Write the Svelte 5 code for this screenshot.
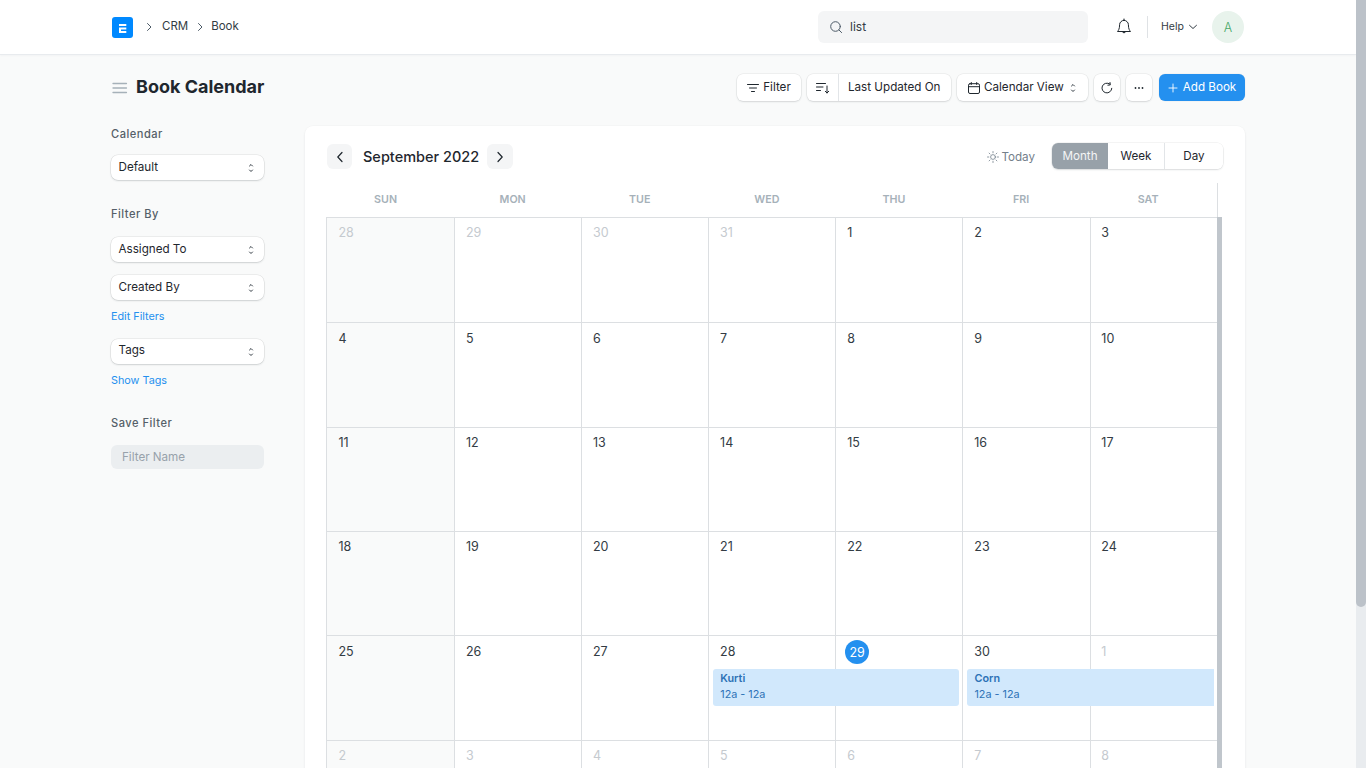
<script>
  const dows = ['SUN','MON','TUE','WED','THU','FRI','SAT'];
  const mk = (a, muted) => a.map((n) => ({ n, muted }));
  const weeks = [
    [...mk([28,29,30,31], true), ...mk([1,2,3], false)],
    mk([4,5,6,7,8,9,10], false),
    mk([11,12,13,14,15,16,17], false),
    mk([18,19,20,21,22,23,24], false),
    [...mk([25,26,27,28,29,30], false), ...mk([1], true)],
    mk([2,3,4,5,6,7,8], true)
  ];
  const heights = [105, 105, 104, 104, 105, 60];
</script>

{#snippet updown()}
  <svg class="updown" width="8" height="14" viewBox="0 0 8 14" fill="none" stroke="#333c44" stroke-width="1" stroke-linecap="round" stroke-linejoin="round"><path d="M2.500 5l1.500-1.500L5.500 5M2.500 9l1.500 1.500L5.500 9"/></svg>
{/snippet}

<div class="page">
  <div class="main">
    <header class="nav">
      <div class="nav-in">
        <svg class="logo" width="21" height="21" viewBox="0 0 21 21"><rect width="21" height="21" rx="3" fill="#0089ff"/><path d="M7 7h7.300v2H7zM9 10.500h5.300v2H9zM7 10.500h2V14h5.300v2H7z" fill="#fff"/></svg>
        <svg class="crumb-sep first" width="8" height="10" viewBox="0 0 8 10" fill="none" stroke="#4c5a67" stroke-width="1" stroke-linecap="round" stroke-linejoin="round"><path d="M2.500 1.500L6 5 2.500 8.500"/></svg>
        <span class="crumb">CRM</span>
        <svg class="crumb-sep" width="8" height="10" viewBox="0 0 8 10" fill="none" stroke="#4c5a67" stroke-width="1" stroke-linecap="round" stroke-linejoin="round"><path d="M2.500 1.500L6 5 2.500 8.500"/></svg>
        <span class="crumb">Book</span>
        <div class="search">
          <svg width="14" height="14" viewBox="0 0 14 14" fill="none" stroke="#4c5a67" stroke-width="1" stroke-linecap="round"><circle cx="6.500" cy="6.500" r="4.800"/><path d="M10 10l2.600 2.600"/></svg>
          <span>list</span>
        </div>
        <svg class="bell" width="16" height="18" viewBox="0 0 16 18" fill="none" stroke="#1f272e" stroke-width="1" stroke-linecap="round" stroke-linejoin="round"><path d="M8 2.300a4.400 4.400 0 0 0-4.400 4.400c0 4.200-1.200 5.800-2.100 6.800h13c-.9-1-2.100-2.600-2.100-6.800A4.400 4.400 0 0 0 8 2.300zM8 1v1.300M6.300 13.600a1.800 1.800 0 0 0 3.400 0"/></svg>
        <div class="vr"></div>
        <span class="help">Help</span>
        <svg class="help-c" width="10" height="8" viewBox="0 0 10 8" fill="none" stroke="#333c44" stroke-width="1" stroke-linecap="round" stroke-linejoin="round"><path d="M1.500 2.300L5 5.500l3.500-3.200"/></svg>
        <div class="avatar">A</div>
      </div>
    </header>

    <div class="body">
      <div class="pagehead">
        <svg class="menu" width="16" height="12" viewBox="0 0 16 12" fill="none" stroke="#a6b1b9" stroke-width="1.300" stroke-linecap="round"><path d="M1 1.500h13.500M1 6h13.500M1 10.500h13.500"/></svg>
        <h1>Book Calendar</h1>
        <div class="actions">
          <button class="btn filter">
            <svg width="12" height="10" viewBox="0 0 12 10" fill="none" stroke="#1f272e" stroke-width="1" stroke-linecap="round"><path d="M.5 1.500h11M2.500 5h7M4.500 8.500h3"/></svg>
            Filter
          </button>
          <div class="btn sort">
            <span class="sort-ic">
              <svg width="14" height="12" viewBox="0 0 14 12" fill="none" stroke="#1f272e" stroke-width="1" stroke-linecap="round" stroke-linejoin="round"><path d="M.5 1.500h9M.5 5h6.500M.5 8.500h4M11 4v7M9.300 9.300L11 11l1.700-1.700"/></svg>
            </span>
            <span class="sort-t">Last Updated On</span>
          </div>
          <button class="btn view">
            <svg width="12" height="12" viewBox="0 0 12 12" fill="none" stroke="#1f272e" stroke-width="1" stroke-linecap="round"><rect x=".5" y="1.700" width="11" height="9.800" rx="1.500"/><path d="M.5 4.700h11M3.300.5v2M8.700.5v2"/></svg>
            <span>Calendar View</span>
            {@render updown()}
          </button>
          <button class="btn square" aria-label="Refresh">
            <svg width="12" height="12" viewBox="0 0 12 12" fill="none" stroke="#1f272e" stroke-width="1" stroke-linecap="round" stroke-linejoin="round"><path d="M10.800 6.300A4.900 4.900 0 1 1 8.600 1.900M9 .5l.3 2.400-2.400.3"/></svg>
          </button>
          <button class="btn square more" aria-label="More">
            <svg width="10" height="4" viewBox="0 0 10 4" fill="#1f272e"><circle cx="1.500" cy="2" r=".9"/><circle cx="5" cy="2" r=".9"/><circle cx="8.500" cy="2" r=".9"/></svg>
          </button>
          <button class="btn primary">
            <svg width="10" height="10" viewBox="0 0 10 10" fill="none" stroke="#fff" stroke-width=".9" stroke-linecap="round"><path d="M5 1v8M1 5h8"/></svg>
            Add Book
          </button>
        </div>
      </div>

      <div class="columns">
        <aside class="side">
          <div class="lab first">Calendar</div>
          <div class="sel">Default {@render updown()}</div>
          <div class="lab filterby">Filter By</div>
          <div class="sel assigned">Assigned To {@render updown()}</div>
          <div class="sel second">Created By {@render updown()}</div>
          <div class="lnk one">Edit Filters</div>
          <div class="sel tags">Tags {@render updown()}</div>
          <div class="lnk two">Show Tags</div>
          <div class="lab save">Save Filter</div>
          <div class="fname">Filter Name</div>
        </aside>

        <section class="card">
          <div class="toolbar">
            <button class="navb" aria-label="Previous">
              <svg width="8" height="12" viewBox="0 0 8 12" fill="none" stroke="#1f272e" stroke-width="1.200" stroke-linecap="round" stroke-linejoin="round"><path d="M6 1.500L1.800 6 6 10.500"/></svg>
            </button>
            <h2>September 2022</h2>
            <button class="navb next" aria-label="Next">
              <svg width="8" height="12" viewBox="0 0 8 12" fill="none" stroke="#1f272e" stroke-width="1.200" stroke-linecap="round" stroke-linejoin="round"><path d="M2 1.500L6.200 6 2 10.500"/></svg>
            </button>
            <div class="today">
              <svg width="12" height="12" viewBox="0 0 12 12" fill="none" stroke="#74808b" stroke-width=".8" stroke-linecap="round"><circle cx="6" cy="6" r="2.400"/><path d="M6 .5v1.300M6 10.200v1.300M.5 6h1.300M10.200 6h1.300M2.100 2.100l.9.9M9 9l.9.9M2.100 9.900l.9-.9M9 3l.9-.9"/></svg>
              Today
            </div>
            <div class="seg">
              <span class="active">Month</span>
              <span class="wk">Week</span>
              <span class="dy">Day</span>
            </div>
          </div>

          <div class="cal">
            <div class="dow">
              {#each dows as d}<div>{d}</div>{/each}
            </div>
            <div class="grid-wrap">
              {#each weeks as w, i}
                <div class="week" style="height:{heights[i]}px">
                  {#each w as c, j}
                    <div class="cell" class:sun={j === 0} class:last={j === 6} style="grid-column:{j + 1}">
                      {#if i === 4 && j === 4}
                        <span class="today-n">{c.n}</span>
                      {:else}
                        <span class="num" class:muted={c.muted}>{c.n}</span>
                      {/if}
                    </div>
                  {/each}
                  {#if i === 4}
                    <div class="ev kurti"><b>Kurti</b><span>12a - 12a</span></div>
                    <div class="ev corn"><b>Corn</b><span>12a - 12a</span></div>
                  {/if}
                </div>
              {/each}
            </div>
            <div class="inner-bar"></div>
          </div>
        </section>
      </div>
    </div>
  </div>
  <div class="vbar"><div class="thumb"></div></div>
</div>

<style>
  :global(body) { margin: 0; overflow: hidden; background: #f9fafa; }
  * { box-sizing: border-box; }
  .page { display: flex; height: 768px; overflow: hidden; font-family: Inter, "Liberation Sans", sans-serif; font-size: 11.650px; color: #1f272e; }
  .main { width: 1356px; flex: none; }
  .vbar { width: 10px; flex: none; background: #e9ecef; }
  .thumb { height: 607px; background: #bcc2c9; border-radius: 0 0 5px 5px; }
  button { font: inherit; color: inherit; padding: 0; border: 0; background: none; }

  .nav { height: 55px; background: #fff; border-bottom: 1px solid #e8ebee; box-shadow: 0 1px 2px rgba(25,39,52,.03); }
  .nav-in { display: flex; align-items: center; height: 54px; padding: 0 112px; }
  .logo { flex: none; align-self: flex-start; margin-top: 17px; }
  .crumb-sep { flex: none; margin-left: 8px; margin-right: 7px; margin-top: -1px; }
  .crumb-sep.first { margin-left: 12px; margin-right: 9px; }
  .crumb { color: #333c44; font-size: 11.500px; margin-top: -2px; }
  .search { margin-left: auto; width: 270px; height: 32px; margin-right: 28px; background: #f4f5f6; border-radius: 6px; display: flex; align-items: center; gap: 8px; padding-left: 11px; color: #333c44; font-size: 12px; }
  .search span { margin-top: -1px; margin-left: -1px; }
  .bell { flex: none; margin-right: 15px; }
  .vr { width: 1px; height: 22px; background: #dfe2e5; margin-right: 13px; }
  .help { font-size: 10.500px; width: 23px; color: #333c44; margin-right: 4px; margin-top: -1px; }
  .help-c { flex: none; margin-right: 14px; }
  .avatar { width: 32px; height: 32px; border-radius: 50%; background: #e8f3ec; color: #48a868; display: flex; align-items: center; justify-content: center; font-size: 12.500px; font-weight: 300; }

  .body { padding: 0 111px; width: 1356px; }
  .pagehead { display: flex; align-items: center; height: 71px; padding-bottom: 7px; }
  .menu { flex: none; margin-left: 1px; margin-right: 8px; margin-top: 2px; }
  h1 { margin: 0; font-size: 18px; font-weight: 700; line-height: 1; color: #1f272e; }
  .actions { margin-left: auto; margin-top: 1px; display: flex; gap: 6px; align-items: center; }
  .btn { height: 27px; background: #fff; border-radius: 6px; box-shadow: 0 0 0 .5px rgba(0,0,0,.08), 0 1px 2px rgba(25,39,52,.12); display: flex; align-items: center; font-size: 11.650px; color: #1f272e; }
  .btn > :global(span), .filter, .primary { line-height: 25px; }
  .filter { width: 64px; justify-content: center; gap: 4px; }
  .sort { width: 144px; }
  .sort-ic { width: 32px; height: 100%; display: flex; align-items: center; justify-content: center; border-right: 1px solid #e2e5e8; }
  .sort-t { padding-left: 9px; }
  .view { width: 131px; padding-left: 11px; gap: 4px; }
  .view .updown { margin-left: 1px; }
  .square { width: 26px; justify-content: center; }
  .more { margin-right: 1px; }
  .primary { width: 86px; background: #2490ef; color: #fff; justify-content: center; gap: 5px; box-shadow: 0 0 0 .5px rgba(0,0,0,.05); }

  .columns { display: flex; gap: 40px; }
  .side { width: 154px; flex: none; }
  .lab { font-size: 11.100px; font-weight: 500; letter-spacing: .5px; color: #555f68; line-height: 14px; }
  .lab.first { margin-top: 1px; }
  .filterby { margin-top: 27px; }
  .save { margin-top: 29px; }
  .sel { height: 25px; width: 153px; background: #fff; border-radius: 7px; box-shadow: 0 0 0 .5px rgba(0,0,0,.1), 0 1px 2px rgba(25,39,52,.14); display: flex; align-items: center; justify-content: space-between; padding: 0 9px 2px 7.500px; margin-top: 14px; font-size: 11.650px; line-height: 14px; }
  .sel :global(svg) { margin-top: 2px; }
  .assigned { margin-top: 16px; }
  .second { margin-top: 13px; }
  .tags { margin-top: 16px; padding-bottom: 4px; }
  .tags :global(svg) { margin-top: 4px; }
  .lnk { color: #2490ef; font-size: 10.800px; line-height: 13px; }
  .one { margin-top: 10px; }
  .two { margin-top: 10px; }
  .fname { margin-top: 15px; height: 24px; width: 153px; background: #ebeef0; border-radius: 6px; color: #98a2ab; font-size: 11.650px; display: flex; align-items: center; padding-left: 11px; }

  .card { width: 941px; height: 700px; background: #fff; border-radius: 8px; box-shadow: 0 0 0 .5px rgba(0,0,0,.02), 0 1px 3px rgba(25,39,52,.06); padding: 18px 21px 0 21px; overflow: hidden; }
  .toolbar { display: flex; align-items: flex-start; height: 26px; margin-bottom: 13px; }
  .navb { width: 25px; height: 25px; margin-left: 1px; border-radius: 6px; background: #f4f5f6; display: flex; align-items: center; justify-content: center; flex: none; }
  .next { width: 26px; margin-left: 8px; }
  h2 { margin: 0 0 0 11px; font-size: 14.500px; font-weight: 500; color: #1f272e; line-height: 25px; }
  .today { margin-left: auto; height: 25px; display: flex; align-items: center; gap: 2px; color: #74808b; font-size: 11.650px; margin-right: 17px; }
  .seg { display: flex; height: 26px; width: 171px; margin-top: -1px; border-radius: 6px; box-shadow: 0 0 0 .5px rgba(0,0,0,.08), 0 1px 2px rgba(25,39,52,.12); margin-right: 1px; font-size: 11.650px; overflow: hidden; }
  .seg span { display: flex; align-items: center; justify-content: center; background: #fff; height: 100%; }
  .seg .active { width: 56px; background: #98a1a9; color: #f4f5f6; }
  .wk { width: 57px; border-right: 1px solid #e2e5e8; }
  .dy { width: 58px; }

  .cal { position: relative; width: 897px; }
  .dow { display: grid; grid-template-columns: repeat(7, 127.100px); height: 34px; width: 892px; border-right: 1px solid #dcdfe2; }
  .dow div { display: flex; align-items: center; justify-content: center; font-size: 10.700px; font-weight: 600; color: #a6b1b9; padding: 0 8px 2px 0; }
  .grid-wrap { width: 892px; border-left: 1px solid #dcdfe2; }
  .week { display: grid; grid-template-columns: repeat(7, 127.100px); grid-template-rows: 1fr; padding-left: 1px; border-top: 1px solid #dcdfe2; }
  .cell { grid-row: 1; border-right: 1px solid #dcdfe2; padding: 7px 0 0 10.800px; min-width: 0; }
  .week:nth-child(2) .cell { padding-top: 8px; }
  .week:nth-child(5) .cell { padding-top: 8px; }
  .cell.sun { background: #f9fafa; margin-left: -1px; padding-left: 11.500px; }
  .cell.last { border-right: 0; }
  .num { display: block; font-size: 12.500px; line-height: 16px; color: #333c44; }
  .num.muted { color: #c5cacf; }
  .today-n { display: flex; width: 24px; height: 24px; margin: -4px 0 0 -2px; border-radius: 50%; background: #2490ef; color: #fff; align-items: center; justify-content: center; font-size: 12.500px; }
  .ev { grid-row: 1; align-self: start; margin-top: 33px; height: 37px; background: #d1e8fc; display: flex; flex-direction: column; padding: 2px 7px; font-size: 10.800px; line-height: 16px; color: #2d72b6; border-radius: 3px; }
  .ev b { font-weight: 600; }
  .kurti { grid-column: 4 / span 2; margin-left: 4px; margin-right: 4px; }
  .corn { grid-column: 6 / span 2; margin-left: 4px; margin-right: 3.500px; border-radius: 3px 0 0 3px; }
  .inner-bar { position: absolute; left: 891px; top: 34px; bottom: -300px; width: 5px; background: #c0c6cc; }
</style>
